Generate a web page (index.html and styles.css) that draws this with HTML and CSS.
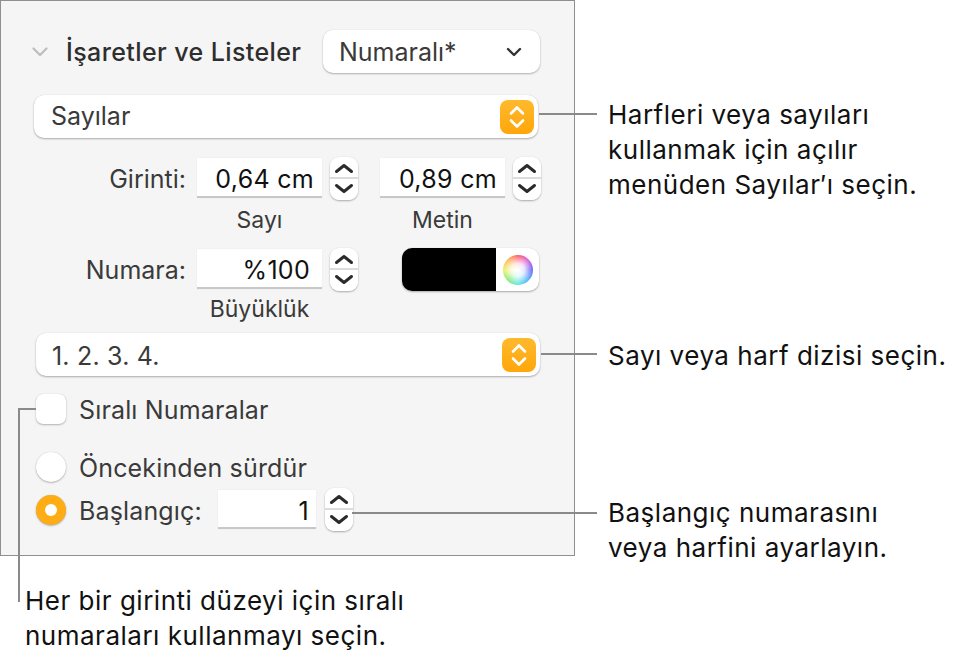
FILE: index.html
```html
<!DOCTYPE html>
<html lang="tr">
<head>
<meta charset="utf-8">
<title>İşaretler ve Listeler</title>
<link rel="stylesheet" href="styles.css">
</head>
<body>
<svg class="defs" width="0" height="0" aria-hidden="true">
  <symbol id="stepper" viewBox="0 0 28 43">
    <path d="M6.500 14.500 14 8.500l7.500 6M6.500 28.500 14 34.500l7.500-6" fill="none" stroke="#2b2b2b" stroke-width="3" stroke-linecap="round" stroke-linejoin="round"/>
  </symbol>
  <symbol id="updown" viewBox="0 0 34 34">
    <path d="M11 13.500 17 7.500l6 6M11 20.500l6 6 6-6" fill="none" stroke="#fff" stroke-width="2.600" stroke-linecap="round" stroke-linejoin="round"/>
  </symbol>
</svg>
<main class="figure">
  <section class="panel">
    <div class="head">
      <svg class="disclosure" width="16" height="10" viewBox="0 0 16 10"><path d="M1.500 1.500 8 8l6.500-6.500" fill="none" stroke="#bdbdbd" stroke-width="2.200" stroke-linecap="round" stroke-linejoin="round"/></svg>
      <h2 class="title">İşaretler ve Listeler</h2>
      <div class="menu">
        <span>Numaralı*</span>
        <svg width="16" height="10" viewBox="0 0 16 10"><path d="M2 2l6 6 6-6" fill="none" stroke="#333" stroke-width="2.400" stroke-linecap="round" stroke-linejoin="round"/></svg>
      </div>
    </div>

    <div class="popup popup-a">
      <span class="popup-text">Sayılar</span>
      <span class="arrows"><svg width="34" height="34"><use href="#updown"/></svg></span>
    </div>

    <div class="row row-indent">
      <span class="label">Girinti:</span>
      <span class="field">0,64 cm</span>
      <span class="stepper"><svg width="28" height="43"><use href="#stepper"/></svg></span>
      <span class="field field-2">0,89 cm</span>
      <span class="stepper"><svg width="28" height="43"><use href="#stepper"/></svg></span>
    </div>
    <div class="captions">
      <span class="cap">Sayı</span>
      <span class="cap cap-2">Metin</span>
    </div>

    <div class="row row-number">
      <span class="label">Numara:</span>
      <span class="field field-pct">%100</span>
      <span class="stepper"><svg width="28" height="43"><use href="#stepper"/></svg></span>
      <span class="well"><span class="swatch"></span><span class="wheel-cell"><span class="wheel"></span></span></span>
    </div>
    <div class="captions captions-b">
      <span class="cap">Büyüklük</span>
    </div>

    <div class="popup popup-b">
      <span class="popup-text">1. 2. 3. 4.</span>
      <span class="arrows"><svg width="34" height="34"><use href="#updown"/></svg></span>
    </div>

    <div class="option option-check">
      <span class="checkbox"></span>
      <span class="opt-text">Sıralı Numaralar</span>
    </div>
    <div class="option option-prev">
      <span class="radio"></span>
      <span class="opt-text">Öncekinden sürdür</span>
    </div>
    <div class="option option-start">
      <span class="radio radio-on"></span>
      <span class="opt-text start-label">Başlangıç:</span>
      <span class="field field-start">1</span>
      <span class="stepper stepper-start"><svg width="28" height="43"><use href="#stepper"/></svg></span>
    </div>
  </section>

  <span class="line line-1"></span>
  <span class="line line-2"></span>
  <span class="line line-3"></span>
  <span class="line line-4h"></span>
  <span class="line line-4v"></span>

  <p class="note note-1">Harfleri veya sayıları<br>kullanmak için açılır<br>menüden Sayılar′ı seçin.</p>
  <p class="note note-2">Sayı veya harf dizisi seçin.</p>
  <p class="note note-3">Başlangıç numarasını<br>veya harfini ayarlayın.</p>
  <p class="note note-4">Her bir girinti düzeyi için sıralı<br>numaraları kullanmayı seçin.</p>
</main>
</body>
</html>
```

FILE: styles.css
```css
* { box-sizing: border-box; }
html, body { margin: 0; padding: 0; background: #fff; }
body {
  font-family: Inter, "Liberation Sans", sans-serif;
  font-size: 25px;
  color: #3a3a3a;
}
.defs { position: absolute; }
.figure { position: relative; width: 955px; height: 662px; overflow: hidden; }

.panel {
  width: 575px;
  height: 556px;
  background: #f5f5f5;
  border: 1px solid #8f8f8f;
  padding: 29px 0 0 33px;
}

.head { display: flex; align-items: center; height: 43px; }
.disclosure { margin: 0 18px 0 -2px; flex: none; }
.title { margin: 0; font-size: 25px; font-weight: 500; letter-spacing: .4px; color: #2e2e2e; width: 257px; white-space: nowrap; }
.menu {
  width: 217px;
  height: 43px;
  background: #fff;
  border-radius: 10px;
  box-shadow: 0 1px 2px rgba(0,0,0,.28), 0 0 1px rgba(0,0,0,.12);
  display: flex;
  align-items: center;
  justify-content: space-between;
  padding: 0 18px 0 16px;
}

.popup {
  height: 43px;
  width: 504px;
  background: #fff;
  border-radius: 10px;
  box-shadow: 0 1px 2px rgba(0,0,0,.3), 0 0 1px rgba(0,0,0,.12);
  display: flex;
  align-items: center;
  justify-content: space-between;
  padding: 0 4px 0 17px;
}
.popup-a { margin-top: 22px; }
.popup-a .popup-text { padding-bottom: 2px; }
.popup-b { margin: 13px 0 0 2px; }
.popup-b .popup-text { padding-top: 2px; letter-spacing: .2px; margin-left: -1px; }
.arrows {
  width: 34px;
  height: 34px;
  border-radius: 8px;
  background: linear-gradient(#ffb92d, #ffa60a);
  display: block;
}
.arrows svg { display: block; }

.row { display: flex; align-items: flex-start; height: 43px; }
.row-indent { margin-top: 19px; }
.row-number { margin-top: 17px; }
.label { width: 163px; padding-right: 11px; text-align: right; line-height: 44px; white-space: nowrap; }
.field {
  width: 125px;
  height: 40px;
  margin-top: 1px;
  background: #fff;
  border-bottom: 2px solid #c8c8c8;
  box-shadow: 0 0 1px rgba(0,0,0,.1);
  color: #111;
  text-align: right;
  padding-right: 8px;
  line-height: 43px;
  letter-spacing: .3px;
  white-space: nowrap;
}
.field-2 { margin-left: 22px; }
.field-pct { padding-right: 12px; }
.stepper {
  width: 28px;
  height: 43px;
  margin-left: 8px;
  border-radius: 9px;
  background: linear-gradient(#fff 0 47%, #dcdcdc 47% 51%, #fff 51%);
  box-shadow: 0 1px 2px rgba(0,0,0,.3), 0 0 1px rgba(0,0,0,.12);
  flex: none;
}
.stepper svg { display: block; }
.stepper-start { margin-left: 9px; }

.captions { position: relative; height: 22px; margin-top: 9px; font-size: 23px; line-height: 22px; }
.captions-b { margin-top: 7px; }
.cap { position: absolute; left: 163px; width: 125px; text-align: center; }
.cap-2 { left: 346px; }

.well {
  display: flex;
  width: 137px;
  height: 43px;
  margin-left: 44px;
  background: #fff;
  border-radius: 10px;
  overflow: hidden;
  box-shadow: 0 1px 2px rgba(0,0,0,.3), 0 0 1px rgba(0,0,0,.12);
}
.swatch { width: 94px; background: #000; }
.wheel-cell { flex: 1; display: flex; align-items: center; justify-content: center; }
.wheel {
  width: 30px;
  height: 30px;
  border-radius: 50%;
  background:
    radial-gradient(circle, #fff 0, rgba(255,255,255,.85) 30%, rgba(255,255,255,0) 74%),
    conic-gradient(#ff4d5e, #d64fd8, #5a5cf5, #3fa9ff, #4fe8e0, #7fe86a, #e8ef5a, #ffb347, #ff4d5e);
}

.option { display: flex; align-items: center; margin-left: 2px; }
.option-check { height: 30px; margin-top: 18px; }
.option-prev { height: 30px; margin-top: 28px; }
.option-start { height: 43px; margin-top: 6px; }
.opt-text { padding-top: 2px; letter-spacing: .15px; }
.checkbox, .radio {
  width: 30px;
  height: 30px;
  background: #fff;
  margin-right: 13px;
  box-shadow: 0 1px 2px rgba(0,0,0,.25), 0 0 1px rgba(0,0,0,.2);
  flex: none;
}
.checkbox { border-radius: 7px; }
.radio { border-radius: 50%; }
.radio-on { background: #ffad14; position: relative; }
.radio-on::after {
  content: "";
  position: absolute;
  left: 9px;
  top: 9px;
  width: 12px;
  height: 12px;
  border-radius: 50%;
  background: #fff;
}
.start-label { width: 139px; white-space: nowrap; }
.field-start { width: 98px; height: 39px; margin-top: 0; padding-right: 7px; }

.line { position: absolute; background: #8a8a8a; }
.line-1 { left: 539px; top: 113px; width: 58px; height: 2px; }
.line-2 { left: 541px; top: 353px; width: 56px; height: 2px; }
.line-3 { left: 352px; top: 512px; width: 245px; height: 2px; }
.line-4h { left: 18px; top: 408px; width: 18px; height: 2px; }
.line-4v { left: 18px; top: 408px; width: 2px; height: 194px; }

.note { position: absolute; margin: 0; font-size: 26px; letter-spacing: .5px; line-height: 35px; color: #111; white-space: nowrap; }
.note-1 { left: 608px; top: 97px; }
.note-2 { left: 608px; top: 338px; }
.note-3 { left: 608px; top: 495px; }
.note-4 { left: 25px; top: 583px; }
```
